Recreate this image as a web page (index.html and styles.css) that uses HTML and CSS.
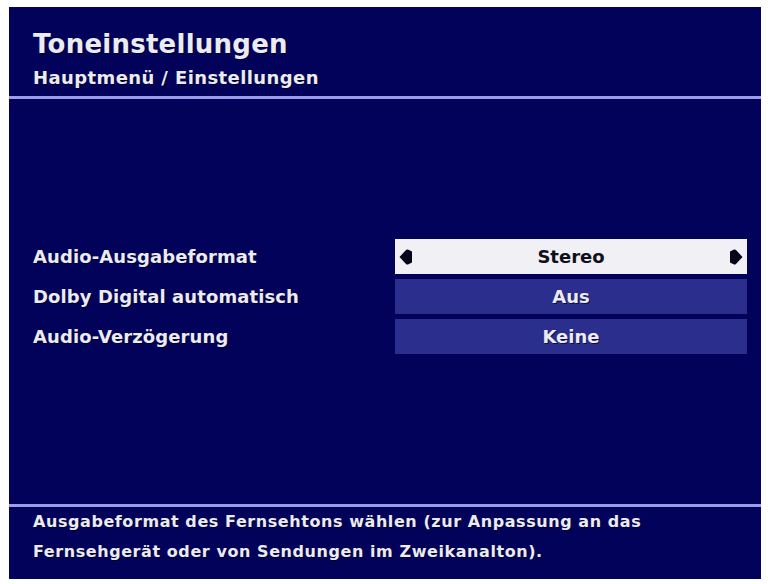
FILE: index.html
```html
<!DOCTYPE html>
<html lang="de">
<head>
<meta charset="utf-8">
<title>Toneinstellungen</title>
<link rel="stylesheet" href="styles.css">
</head>
<body>
<div class="screen">
  <header class="header">
    <h1 class="title">Toneinstellungen</h1>
    <div class="crumb">Hauptmenü / Einstellungen</div>
  </header>
  <div class="rule"></div>
  <main class="main">
    <div class="rows">
      <div class="row">
        <div class="label">Audio-Ausgabeformat</div>
        <div class="value value-active">
          <svg class="arrow" viewBox="0 0 14 16" width="14" height="16"><path d="M0.5 8 L7 1 Q8 0 9.5 0.8 L13 2.5 L13 13.5 L9.5 15.2 Q8 16 7 15 Z" fill="#06061a"/></svg>
          <span class="value-text">Stereo</span>
          <svg class="arrow" viewBox="0 0 14 16" width="14" height="16"><path d="M13.5 8 L7 1 Q6 0 4.5 0.8 L1 2.5 L1 13.5 L4.5 15.2 Q6 16 7 15 Z" fill="#06061a"/></svg>
        </div>
      </div>
      <div class="row">
        <div class="label">Dolby Digital automatisch</div>
        <div class="value"><span class="value-text">Aus</span></div>
      </div>
      <div class="row">
        <div class="label">Audio-Verzögerung</div>
        <div class="value"><span class="value-text">Keine</span></div>
      </div>
    </div>
  </main>
  <div class="rule"></div>
  <footer class="footer">
    <p class="help">Ausgabeformat des Fernsehtons wählen (zur Anpassung an das<br>Fernsehgerät oder von Sendungen im Zweikanalton).</p>
  </footer>
</div>
</body>
</html>
```

FILE: styles.css
```css
html, body {
  margin: 0;
  padding: 0;
  background: #ffffff;
}

body {
  width: 768px;
  height: 584px;
  overflow: hidden;
  font-family: "DejaVu Sans", "Open Sans", sans-serif;
}

.screen {
  margin: 7px 0 0 9px;
  width: 752px;
  height: 572px;
  background: #03025a;
  display: flex;
  flex-direction: column;
  color: #ebebf3;
  text-shadow: 1px 1px 0 rgba(0, 0, 20, 0.7);
}

.header {
  height: 89px;
  padding-left: 24px;
  box-sizing: border-box;
  padding-top: 22px;
}

.title {
  margin: 0;
  font-size: 26px;
  font-weight: bold;
  line-height: 30px;
  letter-spacing: 0.25px;
}

.crumb {
  font-size: 18px;
  font-weight: bold;
  line-height: 22px;
  margin-top: 8px;
  letter-spacing: 0.4px;
}

.rule {
  height: 3px;
  background: #9d9ce8;
  flex: none;
}

.main {
  flex: 1;
  padding-top: 140px;
  box-sizing: border-box;
}

.rows {
  display: flex;
  flex-direction: column;
  gap: 5px;
}

.row {
  display: flex;
  align-items: center;
  height: 35px;
  padding-left: 24px;
}

.label {
  width: 362px;
  font-size: 18px;
  font-weight: bold;
  letter-spacing: 0.1px;
}

.value {
  width: 352px;
  height: 35px;
  background: #2c2e8e;
  display: flex;
  align-items: center;
  justify-content: center;
  font-size: 18px;
  font-weight: bold;
  box-sizing: border-box;
}

.value-active {
  background: #f1f1f5;
  color: #10101a;
  text-shadow: none;
  justify-content: space-between;
  padding: 0 4px 0 4px;
}

.value-active .value-text {
  flex: 1;
  text-align: center;
}

.arrow {
  display: block;
  flex: none;
}

.footer {
  height: 72px;
  padding: 0 0 0 24px;
  box-sizing: border-box;
}

.help {
  margin: 0;
  font-size: 16px;
  font-weight: bold;
  line-height: 30px;
  letter-spacing: 0.57px;
}
```
